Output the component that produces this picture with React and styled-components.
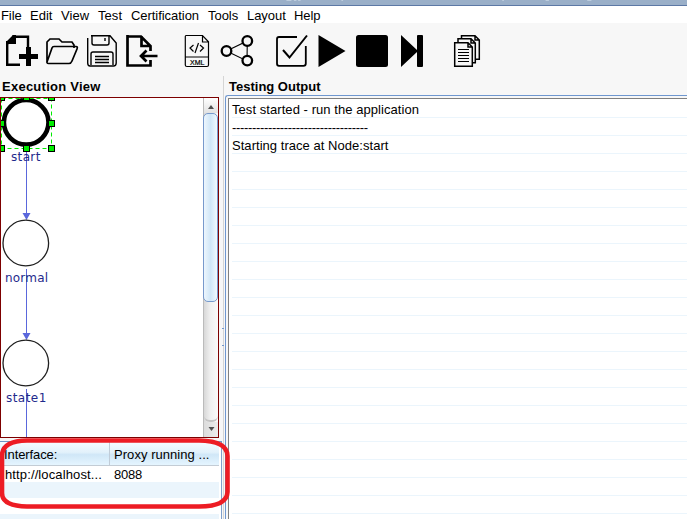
import React from "react";
import styled, { createGlobalStyle } from "styled-components";

const Global = createGlobalStyle`
  * { box-sizing: border-box; }
  body { margin: 0; overflow: hidden; background: #f7f7f7; }
`;

const Window = styled.div`
  position: relative;
  width: 687px;
  height: 519px;
  display: flex;
  flex-direction: column;
  overflow: hidden;
  background: #f7f7f7;
  color: #000;
  font: 13px "Liberation Sans", Arial, sans-serif;
`;

const TitleEdge = styled.svg`
  display: block;
  flex: none;
  height: 6px;
  background: #9aafc8;
  border-bottom: 1px solid #5c78a5;
`;

const MenuBar = styled.nav`
  flex: none;
  height: 17px;
  display: flex;
  padding-left: 1px;
  background: #fff;
  line-height: 19px;
`;

const MenuItem = styled.span`
  width: ${(p) => p.$width}px;
  letter-spacing: ${(p) => p.$spacing}px;
  white-space: nowrap;
`;

const Toolbar = styled.div`
  flex: none;
  height: 53px;
  display: flex;
  padding: 9px 0 0 3px;
`;

const ToolIcon = styled.svg`
  display: block;
  flex: none;
  width: ${(p) => p.$width}px;
  height: 38px;
  fill: none;
  stroke: #000;
`;

const Workspace = styled.main`
  flex: 1;
  min-height: 0;
  display: grid;
  grid-template-columns: 219px 6px 462px;
`;

const Side = styled.section`
  display: flex;
  flex-direction: column;
  min-width: 0;
`;

const Heading = styled.h2`
  flex: none;
  margin: 0;
  height: ${(p) => p.$height}px;
  padding-left: ${(p) => p.$indent}px;
  font-size: 13px;
  line-height: 21px;
  letter-spacing: ${(p) => p.$spacing}px;
`;

const GraphPane = styled.div`
  flex: none;
  height: 341px;
  display: flex;
  border: 1px solid #7d0000;
  background: #fff;
`;

const Graph = styled.svg`
  display: block;
  width: 202px;
  height: 339px;
`;

const NodeLabel = styled.text`
  font: 12px "DejaVu Sans", sans-serif;
  letter-spacing: ${(p) => p.$spacing}px;
  fill: #1f2a8c;
`;

const ScrollBar = styled.div`
  width: 15px;
  display: flex;
  flex-direction: column;
  border-left: 1px solid #bbb;
  background: linear-gradient(90deg, #d8d8d8, #f0f0f0 45%, #fafafa);
`;

const ScrollArrow = styled.svg`
  display: block;
  flex: none;
  width: 14px;
  height: 15px;
  background: ${(p) => (p.$down ? "linear-gradient(90deg, #dcdcdc, #ececec)" : "linear-gradient(#fff, #e2e2e2)")};
  fill: #505050;
`;

const ScrollThumb = styled.div`
  height: 189px;
  margin-left: -1px;
  border: 1px solid #7799cc;
  border-radius: 5px;
  background: linear-gradient(90deg, #edf6fd, #d0e6f7 50%, #f0f9ff);
`;

const ScrollTrack = styled.div`
  flex: 1;
  border-bottom: 2px solid #c4c4c4;
  border-radius: 0 0 6px 6px;
`;

const Table = styled.div`
  flex: 1;
  margin-top: 3px;
  border-top: 1px solid #6f96c4;
  width: 222px;
  border-right: 1px solid #7f9fca;
  background: #fff;
`;

const Row = styled.div`
  display: grid;
  grid-template-columns: 110px 109px;
  width: 219px;
  height: ${(p) => p.$height}px;
  background: ${(p) => p.$fill};
  border-bottom: ${(p) => (p.$header ? "1px solid #c3ccd5" : "0")};
  line-height: ${(p) => p.$line}px;
`;

const Cell = styled.span`
  height: ${(p) => (p.$divider ? "23px" : "auto")};
  padding-left: ${(p) => p.$indent}px;
  letter-spacing: ${(p) => p.$spacing}px;
  border-right: ${(p) => (p.$divider ? "1px solid #c0ccd8" : "0")};
  white-space: nowrap;
`;

const Splitter = styled.svg`
  display: block;
  width: 6px;
  height: 443px;
`;

const OutputFrame = styled.div`
  flex: 1;
  border-top: 1px solid #6f97cf;
  border-left: 1px solid #6f97cf;
  border-top-left-radius: 3px;
  padding: 2px 0 0 2px;
`;

const Output = styled.div`
  height: 100%;
  padding: 1px 0 0 3px;
  border-top: 1px solid #808080;
  border-left: 1px solid #808080;
  background: #fff;
`;

const OutputLine = styled.div`
  height: 18px;
  line-height: 19px;
  border-bottom: 1px solid #ebf5fc;
  letter-spacing: ${(p) => p.$spacing || 0}px;
  white-space: pre;
`;

const Highlight = styled.svg`
  position: absolute;
  left: 0;
  top: 436px;
  fill: none;
  stroke: #ed1c24;
  stroke-width: 4.6;
`;

const MENUS = [
  ["File", 29, -0.1],
  ["Edit", 31, 0],
  ["View", 37, 0.1],
  ["Test", 33, 0.05],
  ["Certification", 77, -0.05],
  ["Tools", 39, -0.05],
  ["Layout", 47, -0.05],
  ["Help", 40, -0.1],
];

const LINES = [
  ["Test started - run the application", 0.06],
  ["----------------------------------", -0.34],
  ["Starting trace at Node:start", 0.04],
  ...Array.from({ length: 21 }, () => ["", 0]),
];

const HANDLES = [
  [-1.5, 94.5], [23.5, 94.5], [48.5, 94.5],
  [-1.5, 120.5], [48.5, 120.5],
  [-1.5, 145.5], [23.5, 145.5], [48.5, 145.5],
];

function Tools() {
  return (
    <Toolbar>
      <ToolIcon $width={41} viewBox="3 32 41 38">
        <path d="M12 36.7H28V48M7.2 41V64.8H20" strokeWidth="2.4" />
        <path d="M6 45V42L13 35H16V44H9ZM26 47H31V54H38V59H31V66H26V59H19V54H26Z" fill="#000" stroke="none" />
      </ToolIcon>
      <ToolIcon $width={40} viewBox="44 32 40 38">
        <path d="M47 62V42L50 39H59L62 42H72L74 45V48M47 62L52 48Q52.5 46.5 54 46.5H76Q78 46.5 77 49L72 61Q71 63.5 69 63.5H48.5Q46.5 63.5 47 61" strokeWidth="1.7" />
      </ToolIcon>
      <ToolIcon $width={40} viewBox="84 32 40 38">
        <path d="M91 35.7H110L116.2 43V63Q116.2 66 113.5 66H90Q87.7 66 87.7 63V38M92 36V43Q92 45 94 45H107Q109 45 109 43V36M105 38V41M91 65V54Q91 52 93 52H111Q113 52 113 54V65" strokeWidth="1.4" />
        <path d="M95 56.5H109M95 59.5H109M95 62.5H109" strokeWidth="1.4" />
      </ToolIcon>
      <ToolIcon $width={57} viewBox="124 32 57 38">
        <path d="M127.5 36.5H141L150.5 46V51M127.5 35V65.5H150.5V60M141.5 36V46H150.5" strokeWidth="2.7" />
        <path d="M157.5 56H141M146.5 50.5L141 56L146.5 61.5" strokeWidth="2.7" />
      </ToolIcon>
      <ToolIcon $width={38} viewBox="181 32 38 38">
        <path d="M186 35.5H202.5L208.5 41.8V65Q208.5 66.5 207 66.5H187Q185.3 66.5 185.3 65V36.5Q185.3 35.5 186 35.5M202.5 36V42H208.5M185 57H209M193.5 45L190 48L193.5 51.5M200 45L203.5 48L200 51.5M198.5 43L195 53" strokeWidth="1.2" />
        <text x="197.2" y="64.6" textAnchor="middle" fontFamily="Liberation Sans" fontSize="7" fill="#000" strokeWidth="0.2">XML</text>
      </ToolIcon>
      <ToolIcon $width={53} viewBox="219 32 53 38">
        <path d="M226.5 51L247.3 41L247 61Z" strokeWidth="1.1" />
        <g fill="#f7f7f7" strokeWidth="2.3">
          <circle cx="226.5" cy="51" r="4.8" /><circle cx="247.3" cy="41" r="4.8" /><circle cx="247.3" cy="60.6" r="4.8" />
        </g>
      </ToolIcon>
      <ToolIcon $width={44} viewBox="272 32 44 38">
        <path d="M297 37H279Q277 37 277 39V63.5Q277 65.8 279 65.8H303.5Q305.8 65.8 305.8 63.5V46" strokeWidth="1.8" />
        <path d="M283 50L289.5 57.5L307 35.5" strokeWidth="2" />
      </ToolIcon>
      <ToolIcon $width={38} viewBox="316 32 38 38">
        <path d="M318.5 35V67L345.5 51Z" fill="#000" stroke="none" />
      </ToolIcon>
      <ToolIcon $width={43} viewBox="354 32 43 38">
        <rect x="356" y="35" width="32" height="32" rx="2.5" fill="#000" stroke="none" />
      </ToolIcon>
      <ToolIcon $width={54} viewBox="397 32 54 38">
        <path d="M401 35L417 50V36Q417 35 418 35H422Q423 35 423 36V66Q423 67 422 67H418Q417 67 417 66V52L401 67Z" fill="#000" stroke="none" />
      </ToolIcon>
      <ToolIcon $width={36} viewBox="451 32 36 38">
        <g fill="#f7f7f7" strokeWidth="1.5">
          <path d="M461.5 35.7H475L479.3 40V59.3H461.5ZM475 36V40H479" />
          <path d="M458 38.7H471L475.3 43V62.8H458ZM471 39V43H475" />
          <path d="M454.7 42.7H468L472.3 47V66.3H454.7ZM468 43V47H472" />
        </g>
        <path d="M458 49.5H469M458 52.5H469M458 55.5H469M458 58.5H469M458 61.5H469" strokeWidth="1.1" />
      </ToolIcon>
    </Toolbar>
  );
}

function NodeGraph() {
  return (
    <Graph viewBox="1 98 202 339">
      <path d="M26.5 148V214M26.5 269V334M26.5 389V437" stroke="#5a67dc" fill="none" />
      <path d="M22.5 213H30.5L26.5 220ZM22.5 333H30.5L26.5 340Z" fill="#5a67dc" />
      <g fill="#fff" stroke="#202020" strokeWidth="1.3">
        <circle cx="25.8" cy="243" r="22.8" />
        <circle cx="25.8" cy="363" r="22.8" />
      </g>
      <circle cx="26.2" cy="122.3" r="22.3" fill="#fff" stroke="#000" strokeWidth="4.6" />
      <rect x="1.5" y="98.5" width="50" height="50" fill="none" stroke="#00ed00" strokeDasharray="4 3" />
      <g fill="#00ed00" stroke="#000">
        {HANDLES.map(([x, y]) => (
          <rect key={`${x}-${y}`} x={x} y={y} width="6" height="6" />
        ))}
      </g>
      <NodeLabel x="11" y="161" $spacing={0.35}>start</NodeLabel>
      <NodeLabel x="5" y="282" $spacing={0.2}>normal</NodeLabel>
      <NodeLabel x="6" y="402" $spacing={0.45}>state1</NodeLabel>
    </Graph>
  );
}

export default function App() {
  return (
    <Window>
      <Global />
      <TitleEdge width="687" height="6" viewBox="0 0 687 6">
        <path d="M275 .5H281M284 .5H287M289 .5H292M341 .5H343M534 .5H536M586 .5H590M636 .5H641" stroke="#c9d6e5" />
      </TitleEdge>
      <MenuBar>
        {MENUS.map(([name, width, spacing]) => (
          <MenuItem key={name} $width={width} $spacing={spacing}>{name}</MenuItem>
        ))}
      </MenuBar>
      <Tools />
      <Workspace>
        <Side>
          <Heading $height={21} $indent={2} $spacing={0.25}>Execution View</Heading>
          <GraphPane>
            <NodeGraph />
            <ScrollBar>
              <ScrollArrow viewBox="0 0 14 15"><path d="M4 11L7 7L10 11Z" /></ScrollArrow>
              <ScrollThumb />
              <ScrollTrack />
              <ScrollArrow $down viewBox="0 0 14 15"><path d="M4.5 5H10.5L7.5 9Z" /></ScrollArrow>
            </ScrollBar>
          </GraphPane>
          <Table>
            <Row $header $height={24} $line={26} $fill="linear-gradient(#f6fbff, #e2f1fb 45%, #d0e7f7 55%, #e5f5ff)">
              <Cell $indent={4} $spacing={-0.1} $divider>Interface:</Cell>
              <Cell $indent={4} $spacing={0.05}>Proxy running ...</Cell>
            </Row>
            <Row $height={16} $line={18} $fill="#fff">
              <Cell $indent={5} $spacing={0.12}>http://localhost...</Cell>
              <Cell $indent={4} $spacing={-0.2}>8088</Cell>
            </Row>
            <Row $height={16} $line={16} $fill="#ebf5fc" />
            <Row $height={16} $line={16} $fill="#fff" />
            <Row $height={16} $line={16} $fill="#ebf5fc" />
          </Table>
        </Side>
        <Splitter viewBox="219 76 6 443">
          <path d="M223.5 76V519" stroke="#d5d5d5" />
          <path d="M222 328.5H224M222 345.5H224" stroke="#7398cb" />
          <path d="M221.5 442V519" stroke="#7f9fca" />
        </Splitter>
        <Side>
          <Heading $height={19} $indent={4} $spacing={0}>Testing Output</Heading>
          <OutputFrame>
            <Output>
              {LINES.map(([text, spacing], i) => (
                <OutputLine key={i} $spacing={spacing}>{text}</OutputLine>
              ))}
            </Output>
          </OutputFrame>
        </Side>
      </Workspace>
      <Highlight width="232" height="76" viewBox="0 436 232 76">
        <path d="M27 440.5H199Q227.5 441 227.5 456V492Q227 506.5 199 506.5H27Q2 506 2 493V456Q2 441 27 440.5Z" />
      </Highlight>
    </Window>
  );
}
